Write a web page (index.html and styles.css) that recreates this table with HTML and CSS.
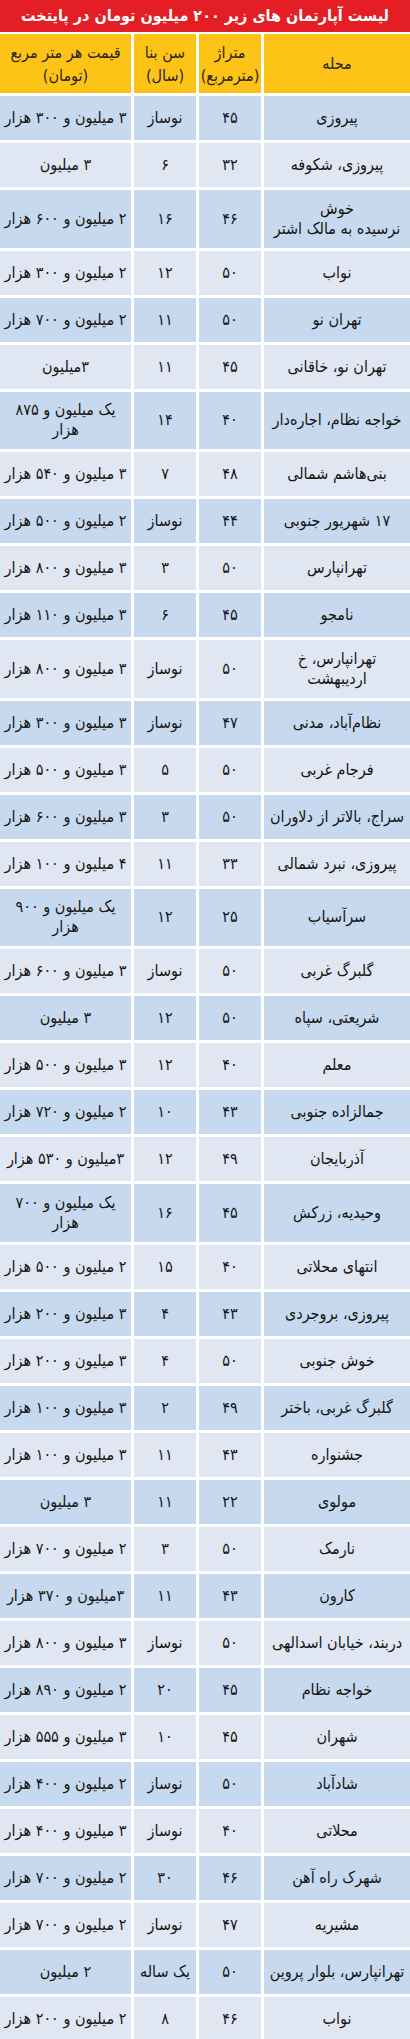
FILE: index.html
```html
<!DOCTYPE html>
<html lang="fa" dir="rtl">
<head>
<meta charset="utf-8">
<title>لیست آپارتمان های زیر ۲۰۰ میلیون تومان در پایتخت</title>
<link rel="stylesheet" href="styles.css">
</head>
<body>
<div class="sheet">
  <h1 class="title">لیست آپارتمان های زیر ۲۰۰ میلیون تومان در پایتخت</h1>
  <div class="table">
    <div class="row head">
      <div class="cell">محله</div>
      <div class="cell">متراژ<br>(مترمربع)</div>
      <div class="cell">سن بنا<br>(سال)</div>
      <div class="cell">قیمت هر متر مربع<br>(تومان)</div>
    </div>
    <div class="row odd"><div class="cell">پیروزی</div><div class="cell">۴۵</div><div class="cell">نوساز</div><div class="cell">۳ میلیون و ۳۰۰ هزار</div></div>
    <div class="row even"><div class="cell">پیروزی، شکوفه</div><div class="cell">۳۲</div><div class="cell">۶</div><div class="cell">۳ میلیون</div></div>
    <div class="row odd tall"><div class="cell">خوش<br>نرسیده به مالک اشتر</div><div class="cell">۴۶</div><div class="cell">۱۶</div><div class="cell">۲ میلیون و ۶۰۰ هزار</div></div>
    <div class="row even"><div class="cell">نواب</div><div class="cell">۵۰</div><div class="cell">۱۲</div><div class="cell">۲ میلیون و ۳۰۰ هزار</div></div>
    <div class="row odd"><div class="cell">تهران نو</div><div class="cell">۵۰</div><div class="cell">۱۱</div><div class="cell">۲ میلیون و ۷۰۰ هزار</div></div>
    <div class="row even"><div class="cell">تهران نو، خاقانی</div><div class="cell">۴۵</div><div class="cell">۱۱</div><div class="cell">۳میلیون</div></div>
    <div class="row odd tall"><div class="cell">خواجه نظام، اجاره‌دار</div><div class="cell">۴۰</div><div class="cell">۱۴</div><div class="cell">یک میلیون و ۸۷۵<br>هزار</div></div>
    <div class="row even"><div class="cell">بنی‌هاشم شمالی</div><div class="cell">۴۸</div><div class="cell">۷</div><div class="cell">۳ میلیون و ۵۴۰ هزار</div></div>
    <div class="row odd"><div class="cell">۱۷ شهریور جنوبی</div><div class="cell">۴۴</div><div class="cell">نوساز</div><div class="cell">۲ میلیون و ۵۰۰ هزار</div></div>
    <div class="row even"><div class="cell">تهرانپارس</div><div class="cell">۵۰</div><div class="cell">۳</div><div class="cell">۳ میلیون و ۸۰۰ هزار</div></div>
    <div class="row odd"><div class="cell">نامجو</div><div class="cell">۴۵</div><div class="cell">۶</div><div class="cell">۳ میلیون و ۱۱۰ هزار</div></div>
    <div class="row even tall"><div class="cell">تهرانپارس، خ<br>اردیبهشت</div><div class="cell">۵۰</div><div class="cell">نوساز</div><div class="cell">۳ میلیون و ۸۰۰ هزار</div></div>
    <div class="row odd"><div class="cell">نظام‌آباد، مدنی</div><div class="cell">۴۷</div><div class="cell">نوساز</div><div class="cell">۳ میلیون و ۳۰۰ هزار</div></div>
    <div class="row even"><div class="cell">فرجام غربی</div><div class="cell">۵۰</div><div class="cell">۵</div><div class="cell">۳ میلیون و ۵۰۰ هزار</div></div>
    <div class="row odd"><div class="cell">سراج، بالاتر از دلاوران</div><div class="cell">۵۰</div><div class="cell">۳</div><div class="cell">۳ میلیون و ۶۰۰ هزار</div></div>
    <div class="row even"><div class="cell">پیروزی، نبرد شمالی</div><div class="cell">۳۳</div><div class="cell">۱۱</div><div class="cell">۴ میلیون و ۱۰۰ هزار</div></div>
    <div class="row odd tall"><div class="cell">سرآسیاب</div><div class="cell">۲۵</div><div class="cell">۱۲</div><div class="cell">یک میلیون و ۹۰۰<br>هزار</div></div>
    <div class="row even"><div class="cell">گلبرگ غربی</div><div class="cell">۵۰</div><div class="cell">نوساز</div><div class="cell">۳ میلیون و ۶۰۰ هزار</div></div>
    <div class="row odd"><div class="cell">شریعتی، سپاه</div><div class="cell">۵۰</div><div class="cell">۱۲</div><div class="cell">۳ میلیون</div></div>
    <div class="row even"><div class="cell">معلم</div><div class="cell">۴۰</div><div class="cell">۱۲</div><div class="cell">۳ میلیون و ۵۰۰ هزار</div></div>
    <div class="row odd"><div class="cell">جمالزاده جنوبی</div><div class="cell">۴۳</div><div class="cell">۱۰</div><div class="cell">۲ میلیون و ۷۲۰ هزار</div></div>
    <div class="row even"><div class="cell">آذربایجان</div><div class="cell">۴۹</div><div class="cell">۱۲</div><div class="cell">۳میلیون و ۵۳۰ هزار</div></div>
    <div class="row odd tall"><div class="cell">وحیدیه، زرکش</div><div class="cell">۴۵</div><div class="cell">۱۶</div><div class="cell">یک میلیون و ۷۰۰<br>هزار</div></div>
    <div class="row even"><div class="cell">انتهای محلاتی</div><div class="cell">۴۰</div><div class="cell">۱۵</div><div class="cell">۲ میلیون و ۵۰۰ هزار</div></div>
    <div class="row odd"><div class="cell">پیروزی، بروجردی</div><div class="cell">۴۳</div><div class="cell">۴</div><div class="cell">۳ میلیون و ۲۰۰ هزار</div></div>
    <div class="row even"><div class="cell">خوش جنوبی</div><div class="cell">۵۰</div><div class="cell">۴</div><div class="cell">۳ میلیون و ۲۰۰ هزار</div></div>
    <div class="row odd"><div class="cell">گلبرگ غربی، باختر</div><div class="cell">۴۹</div><div class="cell">۲</div><div class="cell">۳ میلیون و ۱۰۰ هزار</div></div>
    <div class="row even"><div class="cell">جشنواره</div><div class="cell">۴۳</div><div class="cell">۱۱</div><div class="cell">۳ میلیون و ۱۰۰ هزار</div></div>
    <div class="row odd"><div class="cell">مولوی</div><div class="cell">۲۲</div><div class="cell">۱۱</div><div class="cell">۳ میلیون</div></div>
    <div class="row even"><div class="cell">نارمک</div><div class="cell">۵۰</div><div class="cell">۳</div><div class="cell">۲ میلیون و ۷۰۰ هزار</div></div>
    <div class="row odd"><div class="cell">کارون</div><div class="cell">۴۳</div><div class="cell">۱۱</div><div class="cell">۳میلیون و ۳۷۰ هزار</div></div>
    <div class="row even"><div class="cell">دربند، خیابان اسدالهی</div><div class="cell">۵۰</div><div class="cell">نوساز</div><div class="cell">۳ میلیون و ۸۰۰ هزار</div></div>
    <div class="row odd"><div class="cell">خواجه نظام</div><div class="cell">۴۵</div><div class="cell">۲۰</div><div class="cell">۲ میلیون و ۸۹۰ هزار</div></div>
    <div class="row even"><div class="cell">شهران</div><div class="cell">۴۵</div><div class="cell">۱۰</div><div class="cell">۳ میلیون و ۵۵۵ هزار</div></div>
    <div class="row odd"><div class="cell">شادآباد</div><div class="cell">۵۰</div><div class="cell">نوساز</div><div class="cell">۲ میلیون و ۴۰۰ هزار</div></div>
    <div class="row even"><div class="cell">محلاتی</div><div class="cell">۴۰</div><div class="cell">نوساز</div><div class="cell">۳ میلیون و ۴۰۰ هزار</div></div>
    <div class="row odd"><div class="cell">شهرک راه آهن</div><div class="cell">۴۶</div><div class="cell">۳۰</div><div class="cell">۲ میلیون و ۷۰۰ هزار</div></div>
    <div class="row even"><div class="cell">مشیریه</div><div class="cell">۴۷</div><div class="cell">نوساز</div><div class="cell">۲ میلیون و ۷۰۰ هزار</div></div>
    <div class="row odd"><div class="cell">تهرانپارس، بلوار پروین</div><div class="cell">۵۰</div><div class="cell">یک ساله</div><div class="cell">۲ میلیون</div></div>
    <div class="row even"><div class="cell">نواب</div><div class="cell">۴۶</div><div class="cell">۸</div><div class="cell">۲ میلیون و ۲۰۰ هزار</div></div>
  </div>
</div>
</body>
</html>
```

FILE: styles.css
```css
html, body {
  margin: 0;
  padding: 0;
  background: #ffffff;
}

body {
  font-family: "DejaVu Sans Condensed", "DejaVu Sans", sans-serif;
  color: #151515;
}

.sheet {
  width: 410px;
  direction: rtl;
}

.title {
  margin: 0 0 2px 0;
  height: 32px;
  background: #e31e25;
  color: #ffffff;
  font-size: 16px;
  font-weight: bold;
  line-height: 32px;
  text-align: center;
  white-space: nowrap;
  overflow: hidden;
}

.table {
  display: flex;
  flex-direction: column;
  gap: 3px;
}

.row {
  display: grid;
  grid-template-columns: 146px 62px 62px 131px;
  column-gap: 3px;
  height: 44px;
}

.row.tall {
  height: 57.5px;
}

.row.head {
  height: 59px;
}

.cell {
  display: flex;
  align-items: center;
  justify-content: center;
  text-align: center;
  font-size: 16px;
  line-height: 20px;
  white-space: nowrap;
}

.head .cell {
  background: #fdc417;
  color: #2a2418;
  font-size: 16px;
  line-height: 23px;
}

.odd .cell {
  background: #c6d9ee;
}

.even .cell {
  background: #e0e7f2;
}
```
